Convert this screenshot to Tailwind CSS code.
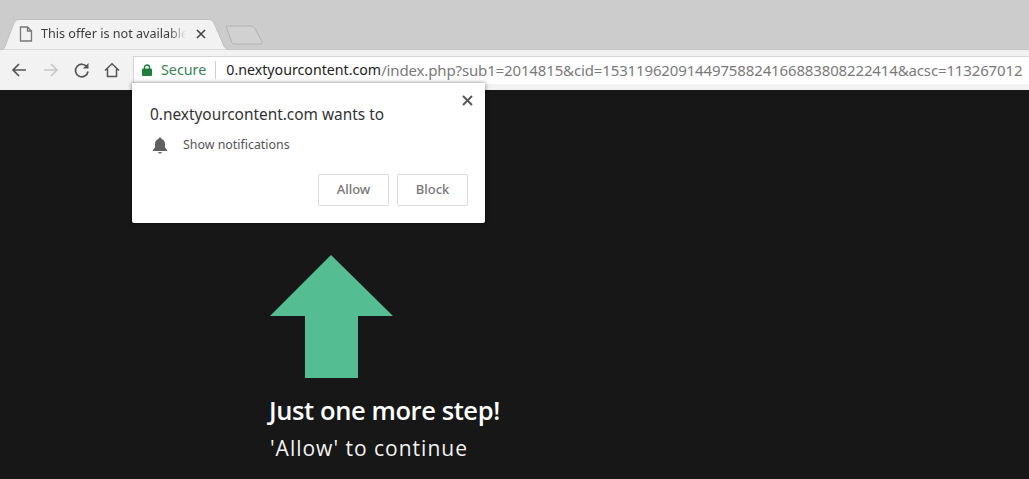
<!DOCTYPE html>
<html lang="en">
<head>
  <meta charset="UTF-8" />
  <title>This offer is not available</title>
  <script src="https://cdn.jsdelivr.net/npm/@tailwindcss/browser@4"></script>
</head>
<body class="relative h-[479px] w-[1029px] overflow-hidden bg-[#171717] font-['Open_Sans',sans-serif]">

  <!-- Tab strip -->
  <div class="relative h-[49px] bg-[#cccccc] flex items-end">
    <div class="relative ml-[2px] h-[30px] w-[227px] flex items-center">
      <svg class="absolute inset-0" width="227" height="31" viewBox="0 0 227 31">
        <path d="M0 31 C2 30 3 28 4 25 L12 4 C13 1.500 15 0.500 18 0.500 L206 0.500 C209 0.500 211 1.500 212 4 L221 25 C222 28 224 30 227 31 Z" fill="#f2f2f2" stroke="#c0c0c0" stroke-width="1"/>
      </svg>
      <svg class="relative ml-[17px]" width="14" height="16" viewBox="0 0 14 16" fill="none" stroke="#777" stroke-width="1.300">
        <path d="M1.500 1 H8.500 L12.500 5 V15 H1.500 Z M8.500 1 V5 H12.500"/>
      </svg>
      <span class="relative ml-[8px] w-[145px] whitespace-nowrap text-[12.600px] leading-[30px] text-[#3c3c3c] font-['Noto_Sans',sans-serif] [mask-image:linear-gradient(to_right,black_88%,transparent_100%)]">This offer is not available</span>
      <svg class="relative ml-[10px]" width="10" height="10" viewBox="0 0 10 10" stroke="#444" stroke-width="1.600">
        <path d="M1 1 L9 9 M9 1 L1 9"/>
      </svg>
    </div>
    <svg class="mb-[4px] -ml-[4px]" width="38" height="20" viewBox="0 0 38 20">
      <path d="M1 1 H26 C28 1 29 2 30 3 L37 17 C37.500 18 37 19 35 19 H10 C8 19 7 18 6.500 17 Z" fill="#d1d1d1" stroke="#b2b2b2"/>
    </svg>
  </div>

  <!-- Toolbar -->
  <div class="h-[41px] bg-[#f2f2f2] border-t border-[#c4c4c4] flex items-center pl-[11px]">
    <svg width="16" height="16" viewBox="0 0 16 16" fill="none" stroke="#555" stroke-width="1.700">
      <path d="M15 8 H2 M8 2 L2 8 L8 14"/>
    </svg>
    <svg class="ml-[16px]" width="16" height="16" viewBox="0 0 16 16" fill="none" stroke="#c6c6c6" stroke-width="1.600">
      <path d="M1 8 H14 M8 2 L14 8 L8 14"/>
    </svg>
    <svg class="ml-[14px]" width="17" height="17" viewBox="0 0 17 17" fill="none" stroke="#555" stroke-width="1.700">
      <path d="M14 5 A6.300 6.300 0 1 0 15 9.500"/>
      <path d="M15.500 1 V6.500 H10" fill="#555" stroke="none"/>
    </svg>
    <svg class="ml-[14px]" width="16" height="16" viewBox="0 0 16 16" fill="none" stroke="#555" stroke-width="1.500">
      <path d="M1 8.500 L8 1.800 L15 8.500 M3.500 7 V14.500 H12.500 V7"/>
    </svg>
    <div class="ml-[13px] -mt-[1px] h-[28px] flex-1 bg-white border-l border-t border-[#d4d4d4] flex items-center whitespace-nowrap overflow-hidden font-['Noto_Sans',sans-serif]">
      <svg class="ml-[8px]" width="10" height="12" viewBox="0 0 10 12">
        <path d="M2.500 5 V3.500 A2.500 2.500 0 0 1 7.500 3.500 V5" fill="none" stroke="#1e7e3c" stroke-width="1.400"/>
        <rect x="0" y="4.500" width="10" height="7.500" rx="1" fill="#1e7e3c"/>
      </svg>
      <span class="ml-[9px] text-[14.300px] text-[#3a8257]">Secure</span>
      <span class="ml-[9px] h-[18px] w-px bg-[#cfcfcf]"></span>
      <span class="ml-[10px] text-[14.200px] text-[#222222]">0.nextyourcontent.com</span>
      <span class="text-[15px] tracking-[-0.14px] text-[#7a7a7a]">/index.php?sub1=2014815&amp;cid=15311962091449758824166883808222414&amp;acsc=113267012</span>
    </div>
  </div>

  <!-- Page content -->
  <main class="pl-[269px] pt-[165px] text-white">
    <svg width="124" height="124" viewBox="0 0 124 124">
      <path d="M62 0 L124 61 H89 V123 H36 V61 H1 Z" fill="#55bd92"/>
    </svg>
    <h1 class="mt-[12px] text-[25.500px] leading-[38px] tracking-[-0.4px] font-semibold whitespace-nowrap">Just one more step!</h1>
    <p class="mt-[3px] pl-px text-[21px] leading-[32px] tracking-[1px] whitespace-nowrap text-[#f2f2f2]">'Allow' to continue</p>
  </main>

  <!-- Notification permission popup -->
  <div class="absolute left-[132px] top-[83px] h-[140px] w-[353px] rounded-b-[2px] bg-white shadow-[0_0_4px_rgba(0,0,0,0.5)] font-['Noto_Sans',sans-serif]">
    <svg class="absolute right-[12px] top-[12px]" width="11" height="11" viewBox="0 0 11 11" stroke="#555" stroke-width="1.900">
      <path d="M1 1 L10 10 M10 1 L1 10"/>
    </svg>
    <div class="pl-[18px] pt-[21px] text-[15.400px] leading-[22px] text-[#333333]">0.nextyourcontent.com wants to</div>
    <div class="mt-[9px] flex items-center pl-[20px]">
      <svg width="16" height="17" viewBox="0 0 16 17" fill="#5f5f5f">
        <path d="M8 0.500 C9 0.500 9.500 1.200 9.500 2 C12 2.800 13 4.800 13 7.500 V10.500 L15 13 V14 H1 V13 L3 10.500 V7.500 C3 4.800 4 2.800 6.500 2 C6.500 1.200 7 0.500 8 0.500 Z M6.300 15 H9.700 C9.500 16 8.900 16.500 8 16.500 C7.100 16.500 6.500 16 6.300 15 Z"/>
      </svg>
      <span class="ml-[15px] text-[12.400px] leading-[20px] text-[#555555]">Show notifications</span>
    </div>
    <div class="mt-[19px] flex justify-end gap-[8px] pr-[17px]">
      <button class="h-[32px] w-[71px] rounded-[2px] border border-[#dcdcdc] bg-white text-[13px] font-medium text-[#777777]">Allow</button>
      <button class="h-[32px] w-[71px] rounded-[2px] border border-[#dcdcdc] bg-white text-[13px] font-medium text-[#777777]">Block</button>
    </div>
  </div>

</body>
</html>
